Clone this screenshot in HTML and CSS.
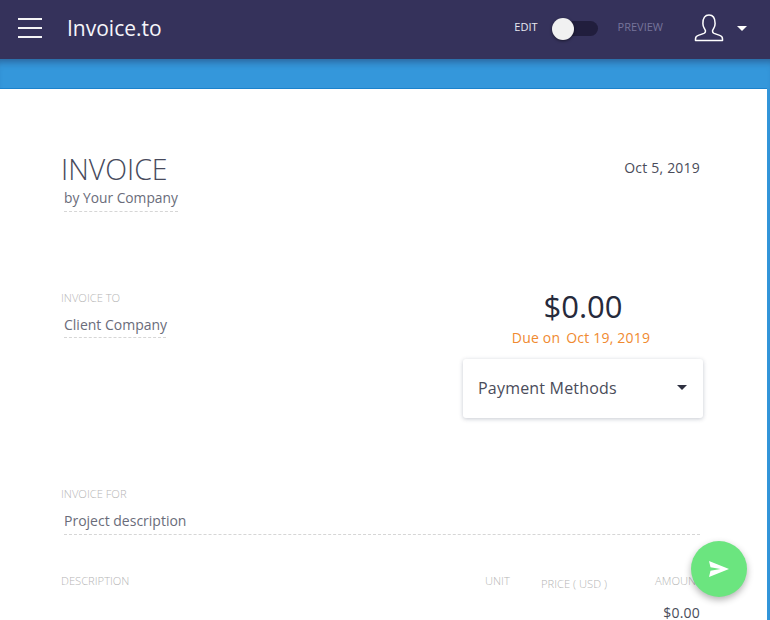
FILE: index.html
```html
<!DOCTYPE html>
<html lang="en">
<head>
<meta charset="utf-8">
<title>Invoice.to</title>
<link rel="stylesheet" href="styles.css">
</head>
<body>
<header class="topbar">
  <div class="menu"><span></span><span></span><span></span></div>
  <div class="brand">Invoice.to</div>
  <div class="mode">
    <span class="mode-edit">EDIT</span>
    <span class="switch"><span class="knob"></span></span>
    <span class="mode-preview">PREVIEW</span>
  </div>
  <svg class="user" width="30" height="30" viewBox="0 0 30 30"><path d="M1.500 27.500v-1.600c0-1.800 1-2.900 2.800-3.500l5.600-2c1.200-.5 1.600-1.300 1.600-2.400 0-1-.6-1.600-1.200-2.600-.9-1.400-1.400-3-1.400-5C8.900 5 11 2 15 2s6.100 3 6.100 8.400c0 2-.5 3.600-1.400 5-.6 1-1.200 1.600-1.200 2.600 0 1.100.4 1.900 1.600 2.400l5.600 2c1.800.6 2.800 1.700 2.800 3.500v1.600z" fill="none" stroke="#fff" stroke-width="1.500" stroke-linejoin="round"/></svg>
  <span class="caret caret-white"></span>
</header>
<div class="band">
  <main class="paper">
    <section class="head-row">
      <div>
        <h1 class="title">INVOICE</h1>
        <div class="field company">by Your Company</div>
      </div>
      <div class="date">Oct 5, 2019</div>
    </section>
    <section class="bill-row">
      <div class="bill-to">
        <div class="label">INVOICE TO</div>
        <div class="field client">Client Company</div>
      </div>
      <div class="summary">
        <div class="total">$0.00</div>
        <div class="due"><span>Due on</span><span>Oct 19, 2019</span></div>
        <div class="payment"><span>Payment Methods</span><span class="caret caret-dark"></span></div>
      </div>
    </section>
    <section class="project">
      <div class="label">INVOICE FOR</div>
      <div class="field desc">Project description</div>
    </section>
    <section class="table">
      <div class="label col-desc">DESCRIPTION</div>
      <div class="label col-unit">UNIT</div>
      <div class="label col-price">PRICE ( USD )</div>
      <div class="label col-amount">AMOUNT</div>
    </section>
    <div class="line-amount">$0.00</div>
  </main>
</div>
<button class="fab" aria-label="Send">
  <svg width="20" height="16" viewBox="0 0 20 16"><path d="M0 0l20 8L0 16l1.500-6.300L11.500 8 1.500 6.300z" fill="#fff"/></svg>
</button>
</body>
</html>
```
FILE: styles.css
```css
* { box-sizing: border-box; }
html, body { margin: 0; height: 620px; overflow: hidden; }
body { background: #fff; font-family: "Open Sans", "Noto Sans", sans-serif; color: #4a4c5a; position: relative; }

.topbar { height: 59px; background: #35325b; display: flex; align-items: center; padding: 0 0 3px 18px; color: #fff; position: relative; z-index: 1; }
.menu { width: 24px; display: flex; flex-direction: column; gap: 7px; }
.menu span { display: block; height: 2px; background: #f4f4f6; }
.brand { margin-left: 25px; font-size: 21px; line-height: 24px; color: #f5f5fa; flex: 1; }
.mode { display: flex; align-items: center; font-size: 11px; }
.mode-edit { color: #e8e8f0; padding-bottom: 3px; }
.switch { width: 45px; height: 15px; border-radius: 8px; background: #211e3d; margin-left: 15px; position: relative; }
.knob { position: absolute; left: -1px; top: -3px; width: 22px; height: 22px; border-radius: 50%; background: #f1f1f1; box-shadow: 0 1px 3px rgba(0,0,0,.5); }
.mode-preview { margin-left: 20px; color: #76749a; padding-bottom: 3px; }
.user { margin-left: 31px; }
.caret { display: block; width: 0; height: 0; border-left: 5px solid transparent; border-right: 5px solid transparent; }
.caret-white { border-top: 5px solid #fff; margin: 0 23px 0 13px; }
.caret-dark { border-top: 5px solid #2e3040; }

.band { height: 561px; background: #3497db; padding: 29px 3px 0 0; box-shadow: inset 0 8px 7px -5px rgba(30,40,80,.45); }
.paper { height: 532px; background: #fff; border-top: 1px solid #1b82cc; padding: 0 67px 0 61px; overflow: hidden; }

.head-row { display: flex; justify-content: space-between; padding-top: 64px; height: 197px; }
.title { margin: 0; font-size: 28.500px; line-height: 32px; font-weight: 300; color: #474a5c; }
.field { font-size: 14px; line-height: 20px; padding-bottom: 3px; margin-left: 3px; border-bottom: 1px dashed #d6d6d6; color: #6a6c7a; }
.company { margin-top: 3px; width: 114px; white-space: nowrap; font-size: 13.800px; }
.date { font-size: 14px; line-height: 20px; margin-top: 5px; letter-spacing: .2px; }

.bill-row { display: flex; justify-content: space-between; height: 198px; }
.label { font-size: 11.200px; line-height: 14px; color: #b5b5b5; font-weight: 300; white-space: nowrap; }
.bill-to { padding-top: 5px; }
.client { margin-top: 10px; padding-bottom: 2px; width: 102px; white-space: nowrap; }
.summary { width: 240px; margin-right: -3px; display: flex; flex-direction: column; align-items: center; }
.total { font-size: 31px; line-height: 38px; font-weight: 500; color: #262a3b; margin-top: 1px; }
.due { display: flex; gap: 6px; font-size: 14px; line-height: 20px; color: #f08a30; margin: 3px 4px 0 0; letter-spacing: .2px; }
.payment { width: 240px; height: 59px; margin-top: 11px; background: #fff; border-radius: 3px; box-shadow: 0 1px 4px rgba(50,60,90,.28); display: flex; align-items: center; justify-content: space-between; padding: 0 16px 2px 15px; font-size: 16px; color: #4a4c5a; letter-spacing: .2px; }

.project { height: 90px; padding-top: 3px; }
.desc { margin-top: 10px; }

.table { display: grid; grid-template-columns: 424px 56px 114px 1fr; height: 40px; }
.col-price { margin-top: 3px; }
.line-amount { text-align: right; font-size: 14px; line-height: 14px; margin-top: -8px; letter-spacing: .2px; }

.fab { position: absolute; left: 691px; top: 541px; width: 56px; height: 56px; border: 0; padding: 0; border-radius: 50%; background: #6be57f; box-shadow: 0 3px 7px rgba(0,0,0,.3); display: flex; align-items: center; justify-content: center; }
```
